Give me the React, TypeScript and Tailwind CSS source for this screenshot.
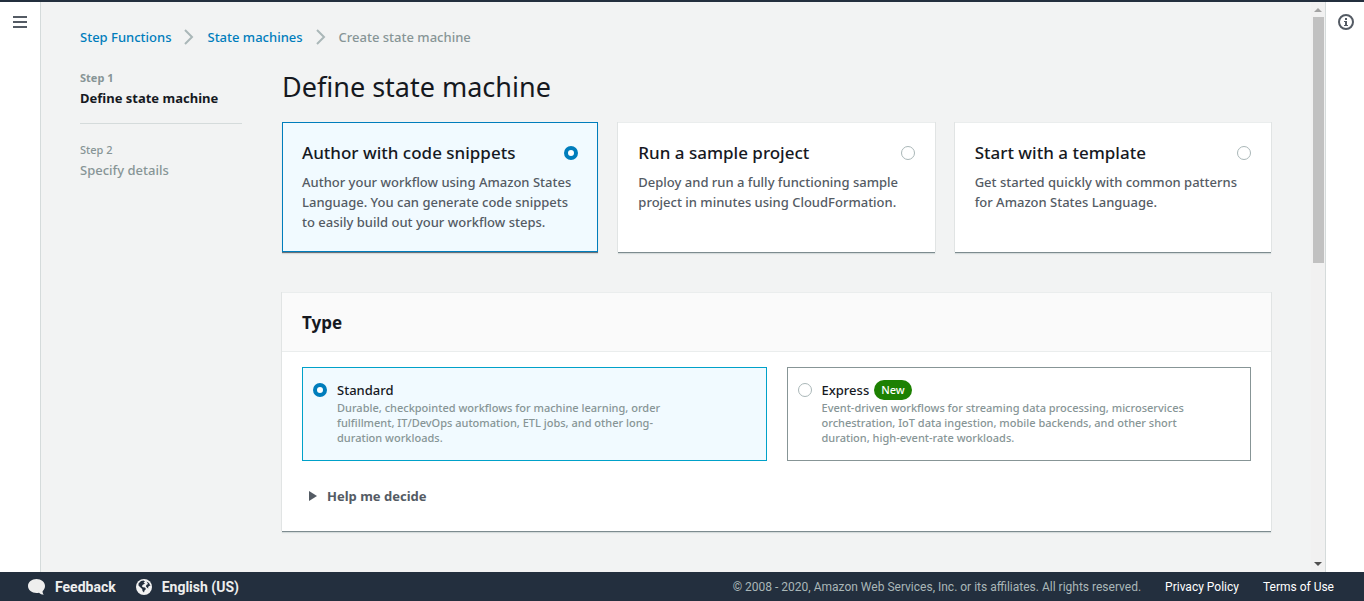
import React, { useState } from 'react';
import clsx from 'clsx';

const AUTHORING_OPTIONS = [
  {
    id: 'snippets',
    title: 'Author with code snippets',
    description:
      'Author your workflow using Amazon States Language. You can generate code snippets to easily build out your workflow steps.',
  },
  {
    id: 'sample',
    title: 'Run a sample project',
    description: 'Deploy and run a fully functioning sample project in minutes using CloudFormation.',
  },
  {
    id: 'template',
    title: 'Start with a template',
    description: 'Get started quickly with common patterns for Amazon States Language.',
  },
];

const TYPE_OPTIONS = [
  {
    id: 'standard',
    title: 'Standard',
    isNew: false,
    description:
      'Durable, checkpointed workflows for machine learning, order fulfillment, IT/DevOps automation, ETL jobs, and other long-\nduration workloads.',
  },
  {
    id: 'express',
    title: 'Express',
    isNew: true,
    description:
      'Event-driven workflows for streaming data processing, microservices orchestration, IoT data ingestion, mobile backends, and other short duration, high-event-rate workloads.',
  },
];

const RADIO =
  'w-3.5 h-3.5 flex-shrink-0 appearance-none rounded-full bg-white border border-[#aab7b8] checked:border-4 checked:border-[#007dbc]';

const BreadcrumbArrow = () => (
  <svg className="w-9 h-4" viewBox="0 0 36 16" fill="none" stroke="#aab7b8" strokeWidth="2" aria-hidden="true">
    <path d="M14 1l7 7-7 7" />
  </svg>
);

const Scrollbar = () => (
  <div className="w-[15px] flex-shrink-0 flex flex-col items-center bg-[#f1f1f1] border-r border-[#d5dbdb]">
    <svg className="w-2 h-[15px]" viewBox="0 0 8 15" fill="#a3a3a3" aria-hidden="true">
      <path d="M4 6l4 4H0z" />
    </svg>
    <div className="w-[11px] h-[246px] bg-[#c1c1c1]" />
    <svg className="w-2 h-[15px] mt-auto" viewBox="0 0 8 15" fill="#505050" aria-hidden="true">
      <path d="M4 9L0 5h8z" />
    </svg>
  </div>
);

const App: React.FC = () => {
  const [authoring, setAuthoring] = useState('snippets');
  const [type, setType] = useState('standard');
  const [helpOpen, setHelpOpen] = useState(false);

  return (
    <div className="h-screen flex flex-col border-t-2 border-[#232f3e] bg-white text-[#16191f] font-['Noto_Sans','Open_Sans',sans-serif] text-[13px] leading-5 font-medium">
      <div className="flex flex-1 min-h-0">
        {/* Collapsed side navigation */}
        <div className="w-10 flex-shrink-0 pt-3 flex justify-center items-start">
          <button aria-label="Open navigation">
            <svg className="w-4 h-4" viewBox="0 0 16 16" fill="#545b64" aria-hidden="true">
              <path d="M1 2h14v2H1zM1 7h14v2H1zM1 12h14v2H1z" />
            </svg>
          </button>
        </div>

        <main className="flex-1 min-w-0 overflow-hidden bg-[#f2f3f3] px-10 pt-[25px] shadow-[inset_1px_0_0_#d5dbdb]">
          <nav aria-label="Breadcrumbs" className="flex items-center">
            <a href="#" className="text-[#007dbc]">Step Functions</a>
            <BreadcrumbArrow />
            <a href="#" className="text-[#007dbc]">State machines</a>
            <BreadcrumbArrow />
            <span className="text-[#879596]">Create state machine</span>
          </nav>

          <div className="flex gap-10 mt-[21px]">
            {/* Wizard steps */}
            <ol className="w-[162px] flex-shrink-0">
              <li className="pb-[15px] border-b border-[#d5dbdb] font-bold">
                <p className="text-[11px] leading-5 text-[#879596]">Step 1</p>
                <p>Define state machine</p>
              </li>
              <li className="pt-4 text-[#879596]">
                <p className="text-[11px] leading-5">Step 2</p>
                <p>Specify details</p>
              </li>
            </ol>

            <div className="flex-1 min-w-0">
              <h1 className="text-[27px] leading-[38px] font-normal mb-4">Define state machine</h1>

              <div className="grid grid-cols-3 gap-5">
                {AUTHORING_OPTIONS.map((option) => (
                  <label
                    key={option.id}
                    className={clsx(
                      'p-5',
                      authoring === option.id
                        ? 'bg-[#f1faff] shadow-[inset_0_0_0_1px_#007dbc,0_1px_0_#687078,0_2px_1px_#d5dbdb]'
                        : 'bg-white shadow-[inset_0_1px_0_#eaeded,-1px_0_0_#e1e4e4,1px_0_0_#e1e4e4,0_1px_0_#7d8b8f,0_2px_1px_#d5dbdb]'
                    )}
                  >
                    <span className="flex items-center justify-between">
                      <span className="text-[17px] leading-[22px]">{option.title}</span>
                      <input
                        type="radio"
                        name="authoring"
                        className={RADIO}
                        checked={authoring === option.id}
                        onChange={() => setAuthoring(option.id)}
                      />
                    </span>
                    <span className="block mt-2 text-[#545b64]">{option.description}</span>
                  </label>
                ))}
              </div>

              {/* Type panel */}
              <section className="mt-10 bg-white shadow-[-1px_0_0_#e1e4e4,1px_0_0_#e1e4e4,0_1px_0_#7d8b8f,0_2px_1px_#d5dbdb]">
                <h2 className="px-5 pt-[19px] pb-[17px] bg-[#fafafa] border-y border-[#eaeded] text-[17px] leading-[22px] font-bold">
                  Type
                </h2>
                <div className="px-5 pt-[15px] pb-[25px]">
                  <div className="grid grid-cols-2 gap-5">
                    {TYPE_OPTIONS.map((option) => (
                      <label
                        key={option.id}
                        className={clsx(
                          'flex gap-2.5 border px-2.5 pt-3 pb-[15px]',
                          type === option.id ? 'bg-[#f1faff] border-[#00a1c9]' : 'bg-white border-[#879596]'
                        )}
                      >
                        <input
                          type="radio"
                          name="type"
                          className={clsx(RADIO, 'mt-[3px]')}
                          checked={type === option.id}
                          onChange={() => setType(option.id)}
                        />
                        <span className="max-w-[374px]">
                          <span className="flex items-center gap-[5px]">
                            {option.title}
                            {option.isNew && (
                              <span className="rounded-full bg-[#1d8102] px-[7px] text-[11px] leading-5 text-white">New</span>
                            )}
                          </span>
                          <span className="block whitespace-pre-line text-[11px] leading-[15px] text-[#879596]">
                            {option.description}
                          </span>
                        </span>
                      </label>
                    ))}
                  </div>

                  <button
                    className="mt-[25px] ml-[7px] flex items-center gap-2.5 font-bold text-[#545b64]"
                    aria-expanded={helpOpen}
                    onClick={() => setHelpOpen(!helpOpen)}
                  >
                    <svg
                      className={clsx('w-2 h-2.5', helpOpen && 'rotate-90')}
                      viewBox="0 0 8 10"
                      fill="#545b64"
                      aria-hidden="true"
                    >
                      <path d="M0 0l8 5-8 5z" />
                    </svg>
                    Help me decide
                  </button>
                </div>
              </section>
            </div>
          </div>
        </main>

        <Scrollbar />

        {/* Collapsed help panel */}
        <div className="w-[38px] flex-shrink-0 pt-3 pl-3">
          <button className="block" aria-label="Open info panel">
            <svg className="w-4 h-4" viewBox="0 0 16 16" aria-hidden="true">
              <circle cx="8" cy="8" r="7" fill="none" stroke="#545b64" strokeWidth="2" />
              <path d="M7 4h2v2H7zM6 7h3v4h1v1H6v-1h1V8H6z" fill="#545b64" />
            </svg>
          </button>
        </div>
      </div>

      <footer className="h-[29px] flex-shrink-0 flex items-center justify-between bg-[#232f3e] pl-7 pr-[30px] font-['Roboto',sans-serif] text-white">
        <div className="flex items-center gap-5 text-sm font-bold text-[#eeeeee]">
          <button className="flex items-center gap-2.5">
            <svg className="w-[17px] h-4" viewBox="0 0 17 16" fill="#eeeeee" aria-hidden="true">
              <path d="M8.500 0C3.800 0 0 3.100 0 7s3.800 7 8.500 7c.9 0 1.700-.1 2.500-.3 1.200 1.300 2.900 2 4.800 2-.9-1-1.300-2.200-1.200-3.500C16.100 10.900 17 9 17 7c0-3.900-3.800-7-8.500-7z" />
            </svg>
            Feedback
          </button>
          <button className="flex items-center gap-2.5">
            <svg className="w-4 h-4" viewBox="0 0 16 16" aria-hidden="true">
              <circle cx="8" cy="8" r="8" fill="#f2f2f2" />
              <path
                d="M2.500 4.500L5 2l2.500-.5 1.500 1-1.500 1 1.500 1L6.500 6l-.5 1.500 1 .7 2 .3L10 10l-1.500 1.500L8 13.500l-1.500-1.500-.3-2L4 8 2.500 6.500zM10.500 2.500l2.500 1.500 1.500 3-1-.3L12 8l.5 1.500-1-.5-1.500-1.500.3-1.500L12 5z"
                fill="#232f3e"
              />
            </svg>
            English (US)
          </button>
        </div>
        <div className="flex items-center gap-6 text-xs font-normal">
          <span className="text-[#aab7b8]">
            © 2008 - 2020, Amazon Web Services, Inc. or its affiliates. All rights reserved.
          </span>
          <a href="#">Privacy Policy</a>
          <a href="#">Terms of Use</a>
        </div>
      </footer>
    </div>
  );
};

export default App;
